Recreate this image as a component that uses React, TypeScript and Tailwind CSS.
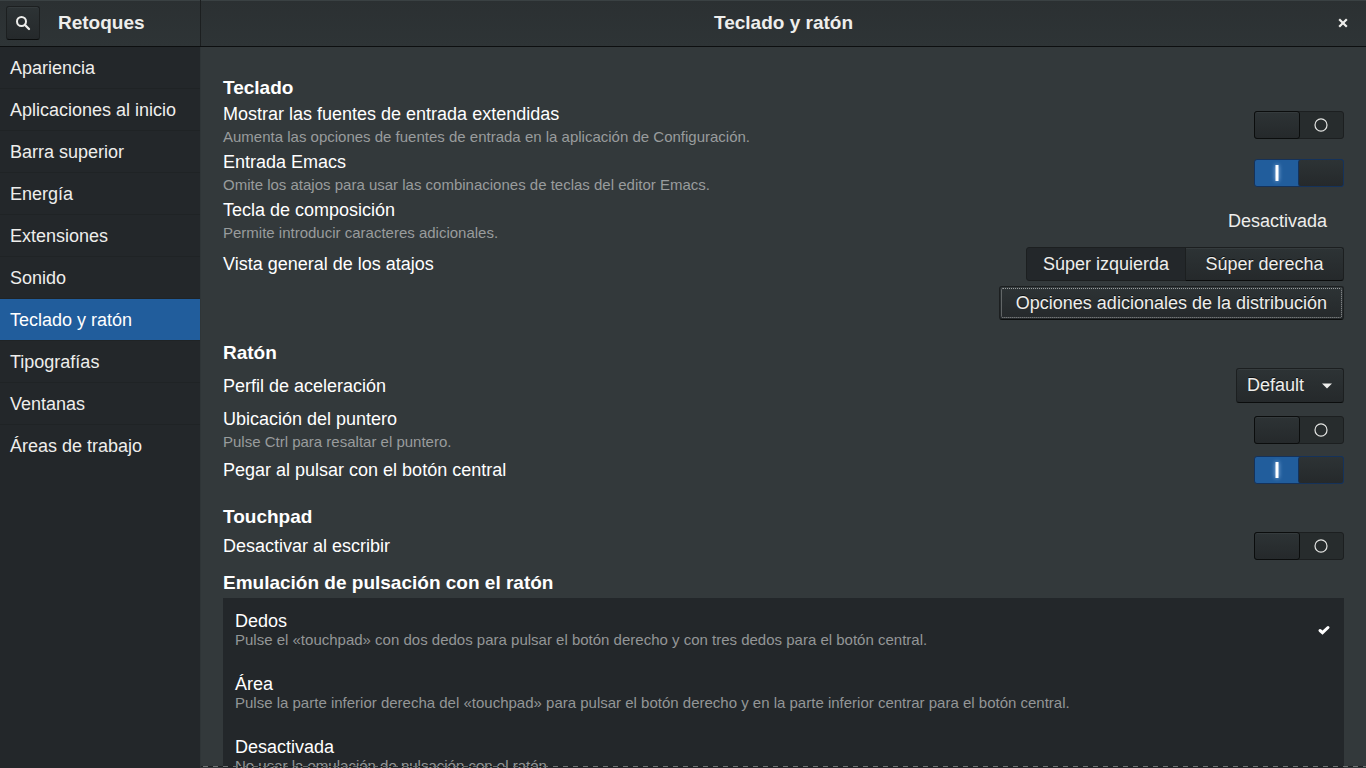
import { useState } from "react";
import type { ReactNode } from "react";

const sections = [
  "Apariencia",
  "Aplicaciones al inicio",
  "Barra superior",
  "Energía",
  "Extensiones",
  "Sonido",
  "Teclado y ratón",
  "Tipografías",
  "Ventanas",
  "Áreas de trabajo",
];

const clickMethods = [
  {
    id: "fingers",
    title: "Dedos",
    hint: "Pulse el «touchpad» con dos dedos para pulsar el botón derecho y con tres dedos para el botón central.",
  },
  {
    id: "areas",
    title: "Área",
    hint: "Pulse la parte inferior derecha del «touchpad» para pulsar el botón derecho y en la parte inferior centrar para el botón central.",
  },
  {
    id: "none",
    title: "Desactivada",
    hint: "No usar la emulación de pulsación con el ratón.",
  },
];

const raised =
  "border border-[#1c1f20] border-b-[#0b0d0d] bg-linear-to-b from-[#2d3335] to-[#25292b] shadow-[inset_0_1px_0_#353b3d] [text-shadow:0_-1px_#0f1212]";

function Heading({ children, className = "" }: { children: ReactNode; className?: string }) {
  return <h2 className={`mb-px text-[19px] leading-6 font-bold text-white ${className}`}>{children}</h2>;
}

function Caption({ title, hint }: { title: string; hint?: string }) {
  return (
    <span className="flex min-w-0 flex-col">
      <span className="leading-6">{title}</span>
      {hint && <span className="text-[15px] leading-[22px] text-[#999c9d]">{hint}</span>}
    </span>
  );
}

function Switch({ id, initial = false }: { id: string; initial?: boolean }) {
  const [on, setOn] = useState(initial);
  return (
    <span
      className={`relative flex h-7 w-[90px] shrink-0 rounded-[3px] border ${
        on ? "border-[#15325a] bg-[#215d9c]" : "border-[#1c1f20] bg-[#272c2d]"
      }`}
    >
      <input
        id={id}
        type="checkbox"
        role="switch"
        checked={on}
        onChange={(e) => setOn(e.target.checked)}
        className="absolute inset-0 z-10 m-0 h-full w-full cursor-pointer opacity-0"
      />
      {on ? (
        <>
          <span className="flex flex-1 items-center justify-center">
            <svg width="14" height="20" viewBox="0 0 14 20" className="drop-shadow-[0_0_2px_#9cc4f0]">
              <rect x="5.500" y="2" width="3" height="16" fill="#fff" />
            </svg>
          </span>
          <span className="-my-px -mr-px w-[46px] rounded-[3px] border border-[#15325a] bg-linear-to-b from-[#2d3335] to-[#25292b]" />
        </>
      ) : (
        <>
          <span className="-my-px -ml-px w-[46px] rounded-[3px] border border-[#0b0d0d] bg-linear-to-b from-[#2d3335] to-[#25292b] shadow-[inset_0_1px_0_#353b3d]" />
          <span className="flex flex-1 items-center justify-center pr-px">
            <svg width="14" height="14" viewBox="0 0 14 14" fill="none">
              <ellipse cx="7" cy="7" rx="6" ry="6.200" stroke="#e4e5e3" strokeWidth="1.200" />
            </svg>
          </span>
        </>
      )}
    </span>
  );
}

function SwitchRow({
  id,
  title,
  hint,
  initial,
  className,
}: {
  id: string;
  title: string;
  hint?: string;
  initial?: boolean;
  className: string;
}) {
  return (
    <div className={`flex items-center justify-between gap-4 ${className}`}>
      <label htmlFor={id}>
        <Caption title={title} hint={hint} />
      </label>
      <Switch id={id} initial={initial} />
    </div>
  );
}

export default function App() {
  const [current, setCurrent] = useState("Teclado y ratón");
  const [overview, setOverview] = useState("left");
  const [method, setMethod] = useState("fingers");

  return (
    <div className="flex h-screen flex-col overflow-hidden bg-[#33393b] font-['Liberation_Sans',Arial,sans-serif] text-[18px] text-[#eeeeec]">
      <header className="flex h-[47px] shrink-0 border-b border-[#0d0f10] bg-linear-to-b from-[#2b3032] to-[#2e3436] shadow-[inset_0_1px_0_#3a4143]">
        <div className="flex w-[201px] shrink-0 items-center border-r border-[#1c1f20] pl-1.5">
          <button
            type="button"
            aria-label="Buscar"
            className={`flex h-[34px] w-[34px] items-center justify-center rounded-[3px] ${raised}`}
          >
            <svg width="16" height="16" viewBox="0 0 16 16" fill="none" stroke="#eeeeec">
              <circle cx="6.500" cy="6.500" r="4.500" strokeWidth="2" />
              <path d="M9.800 9.800 L14 14" strokeWidth="2.300" strokeLinecap="round" />
            </svg>
          </button>
          <span className="ml-[18px] text-[19px] font-bold">Retoques</span>
        </div>
        <div className="flex min-w-0 flex-1 items-center pr-3.5">
          <h1 className="flex-1 pl-8 text-center text-[19px] font-bold">Teclado y ratón</h1>
          <button type="button" aria-label="Cerrar" className="flex h-[18px] w-[18px] items-center justify-center">
            <svg width="10" height="10" viewBox="0 0 10 10" stroke="#eeeeec" strokeWidth="2.200">
              <path d="M1.200 1.200 L8.800 8.800 M8.800 1.200 L1.200 8.800" />
            </svg>
          </button>
        </div>
      </header>

      <div className="flex min-h-0 flex-1">
        <nav className="w-[200px] shrink-0 bg-[#23272a]">
          <ul>
            {sections.map((name) => (
              <li key={name} className="border-b border-[#1f2325] last:border-transparent">
                <a
                  href="#"
                  aria-current={name === current ? "page" : undefined}
                  onClick={(e) => {
                    e.preventDefault();
                    setCurrent(name);
                  }}
                  className={`flex h-[41px] items-center px-2.5 pt-px ${
                    name === current ? "bg-[#215d9c] text-white" : ""
                  }`}
                >
                  {name}
                </a>
              </li>
            ))}
          </ul>
        </nav>

        <main className="relative min-w-0 flex-1 overflow-hidden border-l border-[#2f3537] pt-[29px] pr-[22px] pl-[22px] text-white">
          <section>
            <Heading>Teclado</Heading>
            <SwitchRow
              id="sources"
              title="Mostrar las fuentes de entrada extendidas"
              hint="Aumenta las opciones de fuentes de entrada en la aplicación de Configuración."
              className="h-12"
            />
            <SwitchRow
              id="emacs"
              title="Entrada Emacs"
              hint="Omite los atajos para usar las combinaciones de teclas del editor Emacs."
              initial
              className="h-12"
            />
            <div className="flex h-12 items-center justify-between gap-4">
              <Caption title="Tecla de composición" hint="Permite introducir caracteres adicionales." />
              <button type="button" className="px-[17px] text-[#eeeeec]">
                Desactivada
              </button>
            </div>
            <div className="flex h-[38px] items-center justify-between gap-4">
              <Caption title="Vista general de los atajos" />
              <div className="flex text-[#eeeeec]">
                <button
                  type="button"
                  aria-pressed={overview === "left"}
                  onClick={() => setOverview("left")}
                  className={`h-[34px] w-[160px] rounded-l-[3px] ${
                    overview === "left" ? "border border-[#1c1f20] bg-[#23272a]" : raised
                  }`}
                >
                  Súper izquierda
                </button>
                <button
                  type="button"
                  aria-pressed={overview === "right"}
                  onClick={() => setOverview("right")}
                  className={`-ml-px h-[34px] w-[159px] rounded-r-[3px] ${
                    overview === "right" ? "border border-[#1c1f20] bg-[#23272a]" : raised
                  }`}
                >
                  Súper derecha
                </button>
              </div>
            </div>
            <div className="flex h-10 items-center justify-end">
              <button
                type="button"
                className={`flex h-[34px] rounded-[3px] p-px text-[#eeeeec] ${raised}`}
              >
                <span className="flex h-full items-center rounded-[2px] border border-dotted border-[#9a9d9e] px-3.5">
                  Opciones adicionales de la distribución
                </span>
              </button>
            </div>
          </section>

          <section>
            <Heading className="mt-[18px]">Ratón</Heading>
            <div className="flex h-[39px] items-center justify-between gap-4">
              <label htmlFor="profile">
                <Caption title="Perfil de aceleración" />
              </label>
              <span className="relative flex items-center">
                <select
                  id="profile"
                  defaultValue="Default"
                  className={`h-[35px] w-[108px] appearance-none rounded-[3px] pl-2.5 text-[#eeeeec] ${raised}`}
                >
                  <option>Default</option>
                  <option>Adaptive</option>
                  <option>Flat</option>
                </select>
                <svg
                  width="10"
                  height="6"
                  viewBox="0 0 10 6"
                  className="pointer-events-none absolute right-3"
                  fill="#eeeeec"
                >
                  <path d="M0 0.500 H10 L5 5.500 Z" />
                </svg>
              </span>
            </div>
            <SwitchRow
              id="locate"
              title="Ubicación del puntero"
              hint="Pulse Ctrl para resaltar el puntero."
              className="h-[49px]"
            />
            <SwitchRow id="paste" title="Pegar al pulsar con el botón central" initial className="h-8" />
          </section>

          <section>
            <Heading className="mt-[19px]">Touchpad</Heading>
            <SwitchRow id="typing" title="Desactivar al escribir" className="h-8" />
          </section>

          <section>
            <Heading className="mt-[9px]">Emulación de pulsación con el ratón</Heading>
            <div role="radiogroup" aria-label="Emulación de pulsación con el ratón" className="mt-[3px] bg-[#23272a]">
              {clickMethods.map((m) => (
                <label key={m.id} className="flex h-[63px] items-center justify-between px-3">
                  <span className="flex min-w-0 flex-col">
                    <span className="leading-5">{m.title}</span>
                    <span className="text-[15px] leading-[18px] text-[#939697]">{m.hint}</span>
                  </span>
                  <input
                    type="radio"
                    name="click-method"
                    checked={method === m.id}
                    onChange={() => setMethod(m.id)}
                    className="sr-only"
                  />
                  {method === m.id && (
                    <svg width="16" height="16" viewBox="0 0 16 16" fill="none" stroke="#fff" strokeWidth="3">
                      <path d="M4 8.500 L6.500 10.700 L12 5.500" strokeLinecap="round" />
                    </svg>
                  )}
                </label>
              ))}
            </div>
          </section>

          <div className="pointer-events-none absolute right-0 bottom-px left-0 h-px bg-[repeating-linear-gradient(90deg,#1d2021_0_2px,#6f7374_2px_7px,#1d2021_7px_10px)]" />
        </main>
      </div>
    </div>
  );
}
